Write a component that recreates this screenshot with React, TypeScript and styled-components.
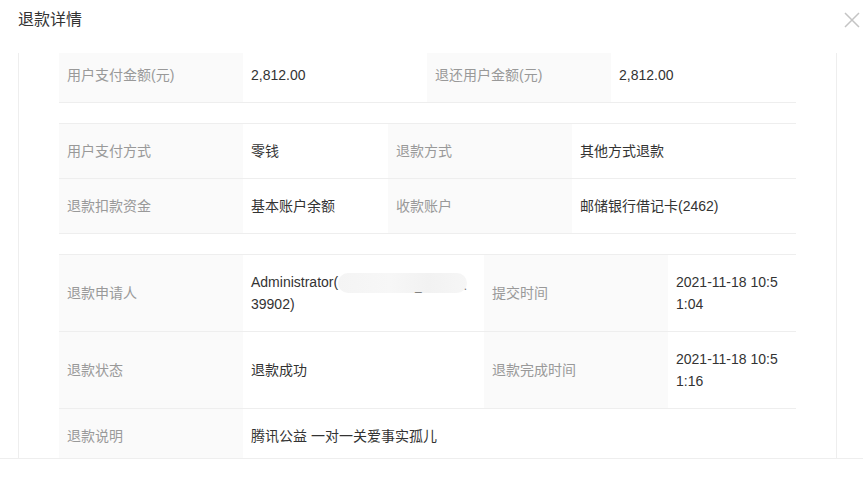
import React from 'react';
import styled, { createGlobalStyle } from 'styled-components';

const GlobalStyle = createGlobalStyle`
  html, body { margin: 0; padding: 0; background: #fff; overflow: hidden; }
  body { font-family: "Liberation Sans", "Noto Sans CJK SC", sans-serif; }
  * { box-sizing: border-box; }
`;

const Modal = styled.div`
  width: 863px;
  height: 479px;
  display: flex;
  flex-direction: column;
  background: #fff;
  overflow: hidden;
`;

const Header = styled.header`
  height: 53px;
  flex: none;
  display: flex;
  justify-content: space-between;
  align-items: flex-start;
  padding: 9px 3px 0 18px;
`;

const Title = styled.h2`
  margin: 0;
  font-size: 16px;
  line-height: 22px;
  font-weight: normal;
  color: #333;
`;

const CloseButton = styled.button`
  border: 0;
  background: none;
  padding: 0;
  margin-top: 3px;
  width: 16px;
  height: 16px;
  display: flex;
  cursor: pointer;
`;

const Body = styled.div`
  height: 405px;
  flex: none;
  margin: 0 26px 0 18px;
  border-left: 1px solid #eee;
  border-right: 1px solid #eee;
  padding: 0 40px;
  overflow: hidden;
`;

const Scroll = styled.div`
  margin-top: -6px;
  display: flex;
  flex-direction: column;
  gap: 20px;
`;

const Section = styled.div<{ $cols: string }>`
  display: grid;
  grid-template-columns: ${(p) => p.$cols};
  border-top: 1px solid #eee;
`;

const Cell = styled.div<{ $label?: boolean; $span?: number }>`
  padding: 16px 16px 16px 8px;
  font-size: 14px;
  line-height: 22px;
  color: ${(p) => (p.$label ? '#999' : '#333')};
  background: ${(p) => (p.$label ? '#fafafa' : '#fff')};
  border-bottom: 1px solid #eee;
  display: flex;
  align-items: center;
  word-break: break-all;
  grid-column: ${(p) => (p.$span ? `span ${p.$span}` : 'auto')};
`;

const ValueText = styled.span`
  display: block;
`;

const Redacted = styled.span`
  display: inline-flex;
  justify-content: flex-end;
  align-items: flex-end;
  width: 129px;
  height: 20px;
  vertical-align: middle;
  border-radius: 10px;
  background: linear-gradient(90deg, #f4f4f4 0%, #f7f7f7 40%, #f2f2f2 70%, #f6f6f6 100%);
  color: #777;
  font-size: 12px;
  line-height: 14px;
`;

const RedactedMark = styled.span<{ $gap?: number }>`
  margin-right: ${(p) => p.$gap ?? 0}px;
`;

const Footer = styled.footer`
  flex: 1;
  border-top: 1px solid #eee;
`;

const CloseIcon = () => (
  <svg width="16" height="16" viewBox="0 0 16 16">
    <path d="M1 1 L15 15 M15 1 L1 15" stroke="#c4c4c4" strokeWidth="1.5" fill="none" />
  </svg>
);

export default function App() {
  return (
    <>
      <GlobalStyle />
      <Modal>
        <Header>
          <Title>退款详情</Title>
          <CloseButton aria-label="关闭">
            <CloseIcon />
          </CloseButton>
        </Header>
        <Body>
          <Scroll>
            <Section $cols="184px 184px 184px 1fr">
              <Cell $label>用户支付金额(元)</Cell>
              <Cell>2,812.00</Cell>
              <Cell $label>退还用户金额(元)</Cell>
              <Cell>2,812.00</Cell>
            </Section>
            <Section $cols="184px 145px 184px 1fr">
              <Cell $label>用户支付方式</Cell>
              <Cell>零钱</Cell>
              <Cell $label>退款方式</Cell>
              <Cell>其他方式退款</Cell>
              <Cell $label>退款扣款资金</Cell>
              <Cell>基本账户余额</Cell>
              <Cell $label>收款账户</Cell>
              <Cell>邮储银行借记卡(2462)</Cell>
            </Section>
            <Section $cols="184px 241px 184px 1fr">
              <Cell $label>退款申请人</Cell>
              <Cell>
                <ValueText>
                  Administrator(
                  <Redacted>
                    <RedactedMark $gap={42}>_</RedactedMark>
                    <RedactedMark $gap={0}>.</RedactedMark>
                  </Redacted>
                  39902)
                </ValueText>
              </Cell>
              <Cell $label>提交时间</Cell>
              <Cell>
                <ValueText>2021-11-18 10:51:04</ValueText>
              </Cell>
              <Cell $label>退款状态</Cell>
              <Cell>退款成功</Cell>
              <Cell $label>退款完成时间</Cell>
              <Cell>
                <ValueText>2021-11-18 10:51:16</ValueText>
              </Cell>
              <Cell $label>退款说明</Cell>
              <Cell $span={3}>腾讯公益 一对一关爱事实孤儿</Cell>
            </Section>
          </Scroll>
        </Body>
        <Footer />
      </Modal>
    </>
  );
}
